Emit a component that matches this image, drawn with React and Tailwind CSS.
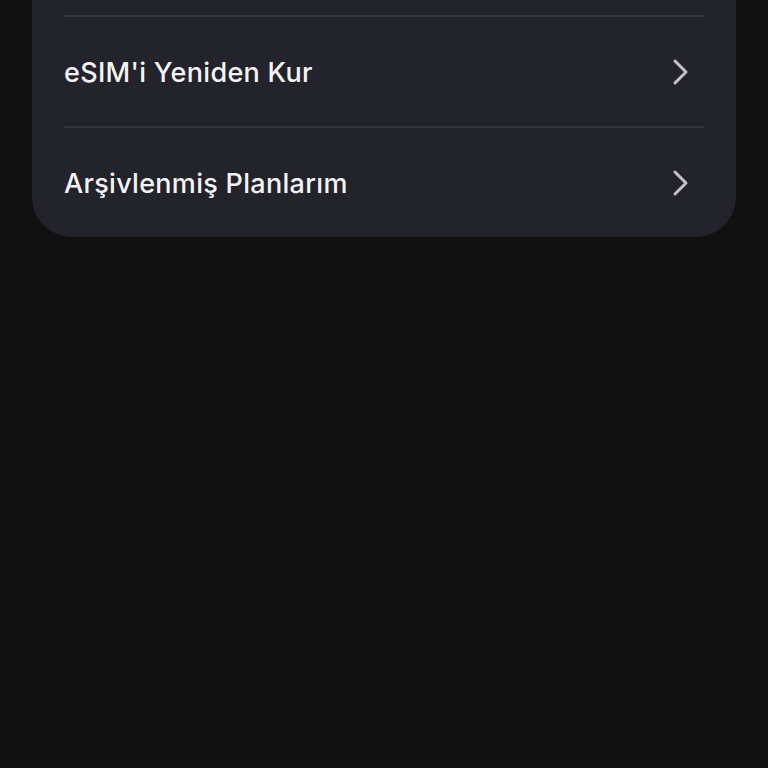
import React from 'react';

const rows = ["eSIM'i Yeniden Kur", 'Arşivlenmiş Planlarım'];

const Chevron = () => (
  <svg width="18" height="28" viewBox="0 0 18 28" fill="none" className="shrink-0">
    <path d="M3 3l11 11L3 25" stroke="#c2c2c8" strokeWidth="3" strokeLinecap="round" strokeLinejoin="round" />
  </svg>
);

const App = () => {
  return (
    <div className="w-[768px] h-[768px] overflow-hidden bg-[#111111]" style={{ fontFamily: 'Inter, "Noto Sans", sans-serif' }}>
      <div className="mx-8 -mt-[96px] rounded-b-[40px] bg-[#22232b] px-8">
        {/* row above the fold */}
        <div className="h-[111px]" />
        {rows.map((label) => (
          <div key={label} className="flex h-[111px] items-center justify-between border-t-2 border-[#34353d] pr-[14px]">
            <span className="text-[27px] font-medium leading-none text-[#f4f4f6] tracking-[0.3px] pt-[1px]">{label}</span>
            <Chevron />
          </div>
        ))}
      </div>
    </div>
  );
};

export default App;
